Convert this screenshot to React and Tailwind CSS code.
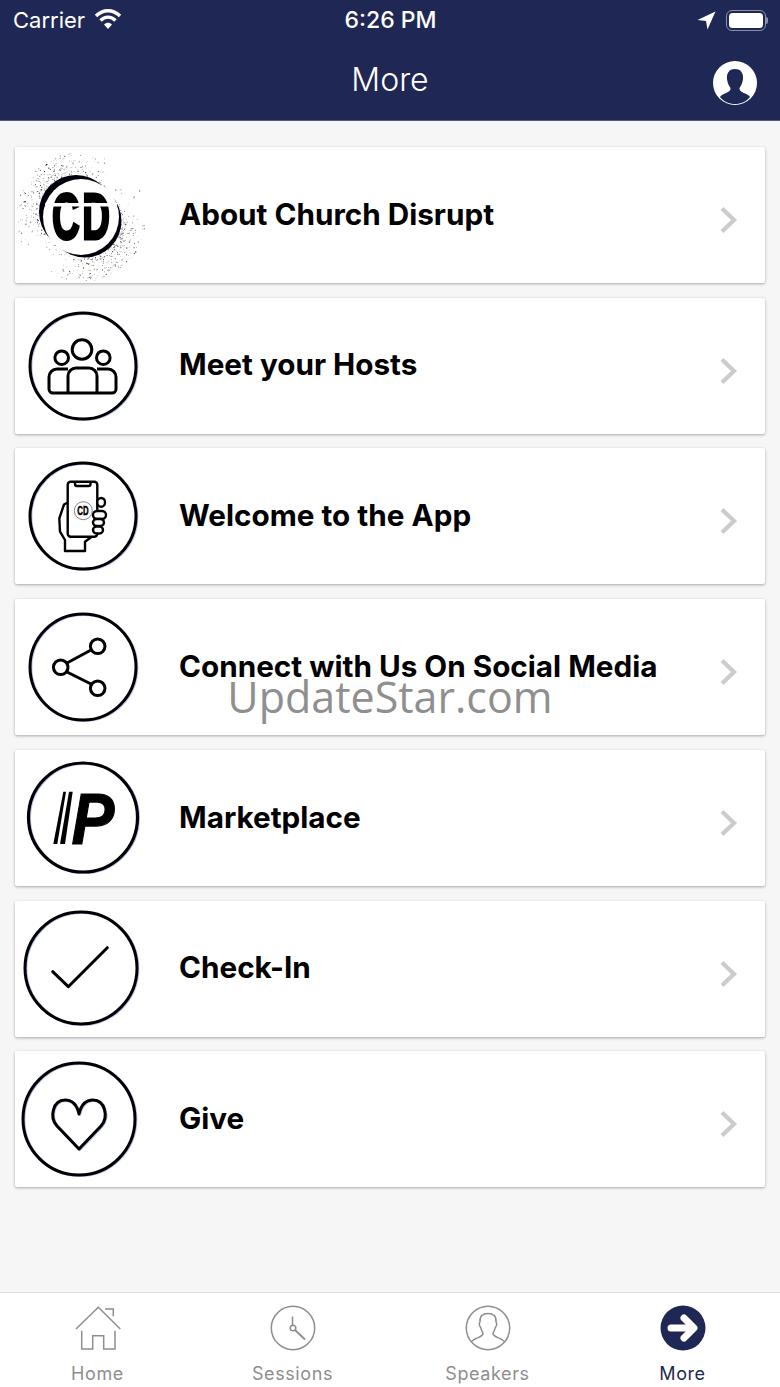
const FONT = { fontFamily: "Inter, 'Noto Sans', sans-serif" };

// seeded dots for the spray paint logo
function makeSpray() {
    let seed = 7;
    const rnd = () => {
        seed = (seed * 16807) % 2147483647;
        return seed / 2147483647;
    };
    const dots = [];
    for (let i = 0; i < 1100; i++) {
        const side = rnd() < 0.55 ? 3.9 : 0.85;
        const spread = (rnd() + rnd() + rnd() - 1.5) * 1.15;
        const angle = side + spread;
        const out = Math.pow(rnd(), 2.3) * 27;
        const r = 38 + out;
        dots.push({
            x: 66 + Math.cos(angle) * r,
            y: 70 + Math.sin(angle) * r,
            s: 0.22 + rnd() * 0.42,
            o: 0.35 + rnd() * 0.6,
        });
    }
    return dots;
}
const sprayDots = makeSpray();

function Ring({ cx, cy, r, sw = 3 }) {
    return (
        <>
            <circle cx={cx + 0.9} cy={cy + 0.5} r={r} fill="none" stroke="#b9c2ee" strokeWidth={sw} />
            <circle cx={cx} cy={cy} r={r} fill="none" stroke="#000" strokeWidth={sw} />
        </>
    );
}

function IconBox({ children }) {
    return (
        <svg width="165" height="136" viewBox="0 0 165 136" className="shrink-0">
            {children}
        </svg>
    );
}

function LogoIcon() {
    return (
        <IconBox>
            <defs>
                <filter id="soft" x="-20%" y="-20%" width="140%" height="140%">
                    <feGaussianBlur stdDeviation="0.6" />
                </filter>
            </defs>
            <g filter="url(#soft)">
                <circle cx="61" cy="65" r="37" fill="#05050f" />
                <circle cx="70" cy="74" r="36.5" fill="#05050f" />
            </g>
            {sprayDots.map((d, i) => (
                <circle key={i} cx={d.x} cy={d.y} r={d.s} fill="#0a0a14" opacity={d.o} />
            ))}
            <circle cx="66" cy="70" r="38" fill="#fff" />
            <text
                x="0"
                y="0"
                transform="translate(37 91.5) scale(0.6 1)"
                fontFamily="'Liberation Sans', sans-serif"
                fontWeight="700"
                fontSize="64"
                letterSpacing="4"
                stroke="#000"
                strokeWidth="3"
                fill="#000"
            >
                CD
            </text>
            <rect x="30" y="56" width="72" height="3.5" fill="#fff" />
        </IconBox>
    );
}

function HostsIcon() {
    return (
        <IconBox>
            <Ring cx={68} cy={68} r={53} />
            <g fill="none" stroke="#000" strokeWidth="3" strokeLinejoin="round">
                <circle cx="67" cy="51.5" r="9.8" />
                <circle cx="46.7" cy="59.7" r="6.8" />
                <circle cx="88.3" cy="59.7" r="6.8" />
                <path d="M53 95 V78 a8 8 0 0 1 8-8 h13 a8 8 0 0 1 8 8 V95" />
                <path d="M53 71 H42 a8 8 0 0 0 -8 8 v12 a4 4 0 0 0 4 4 H97 a4 4 0 0 0 4-4 v-12 a8 8 0 0 0-8-8 H82" />
            </g>
        </IconBox>
    );
}

function PhoneIcon() {
    return (
        <IconBox>
            <Ring cx={68} cy={68} r={53} />
            <g fill="none" stroke="#000" strokeWidth="2.4" strokeLinejoin="round">
                <path d="M53.3 54.3 L49 56.5 L44.3 70.3 L45 83.7 L50 92 V103 H70 V93.7 L76.7 88.7" />
                <rect x="52.7" y="33.7" width="29.6" height="55" rx="3" fill="#fff" />
                <path d="M60 34 v2 a2 2 0 0 0 2 2 h11.5 a2 2 0 0 0 2-2 v-2" />
                <rect x="82.3" y="50" width="7.7" height="8.7" rx="4" fill="#fff" />
                <rect x="78" y="63" width="13" height="8" rx="4" fill="#fff" />
                <rect x="78" y="71" width="11" height="7" rx="3.5" fill="#fff" />
                <rect x="78" y="78.5" width="10" height="7" rx="3.5" fill="#fff" />
            </g>
            <circle cx="68.3" cy="62.7" r="9" fill="#fff" stroke="#666" strokeWidth="0.8" />
            <text
                transform="translate(62.3 67) scale(0.65 1)"
                fontFamily="'Liberation Sans', sans-serif"
                fontWeight="700"
                fontSize="12"
                stroke="#000"
                strokeWidth="0.5"
                fill="#000"
            >
                CD
            </text>
        </IconBox>
    );
}

function ShareIcon() {
    return (
        <IconBox>
            <Ring cx={68} cy={68} r={53} />
            <g fill="none" stroke="#000" strokeWidth="3">
                <line x1="52" y1="64" x2="76" y2="51" />
                <line x1="52" y1="73" x2="76" y2="85" />
                <circle cx="82.7" cy="47.3" r="7.3" />
                <circle cx="45.7" cy="68.3" r="7.3" />
                <circle cx="82.7" cy="89.3" r="7.3" />
            </g>
        </IconBox>
    );
}

function MarketIcon() {
    return (
        <IconBox>
            <Ring cx={68} cy={67.5} r={54.5} sw={3.2} />
            <polygon points="48.3,41.7 51,41.7 42.3,94 38.3,94" fill="#000" />
            <polygon points="54,41.7 57.7,41.7 50,94 45,94" fill="#000" />
            <text
                transform="translate(56.5 93.5) scale(0.88 1)"
                fontFamily="'Liberation Sans', sans-serif"
                fontWeight="700"
                fontStyle="italic"
                fontSize="73"
                stroke="#000"
                strokeWidth="1.2"
                fill="#000"
            >
                P
            </text>
        </IconBox>
    );
}

function CheckIcon() {
    return (
        <IconBox>
            <Ring cx={66} cy={67} r={56} />
            <path d="M37.7 70.7 L53.3 85.7 L92.3 46.7" fill="none" stroke="#000" strokeWidth="3" strokeLinecap="round" strokeLinejoin="round" />
        </IconBox>
    );
}

function GiveIcon() {
    const heart = "M64 98 L42 75 C34 66 38 49 50 49 C57 49 62 54 64 63 C66 54 71 49 78 49 C90 49 94 66 86 75 Z";
    return (
        <IconBox>
            <Ring cx={64} cy={68} r={56} />
            <path d={heart} transform="translate(0.8 0.6)" fill="none" stroke="#b9c2ee" strokeWidth="3" strokeLinejoin="round" />
            <path d={heart} fill="none" stroke="#000" strokeWidth="3" strokeLinejoin="round" />
        </IconBox>
    );
}

const items = [
    { title: "About Church Disrupt", Icon: LogoIcon },
    { title: "Meet your Hosts", Icon: HostsIcon },
    { title: "Welcome to the App", Icon: PhoneIcon },
    { title: "Connect with Us On Social Media", Icon: ShareIcon },
    { title: "Marketplace", Icon: MarketIcon },
    { title: "Check-In", Icon: CheckIcon },
    { title: "Give", Icon: GiveIcon },
];

function Row({ title, Icon }) {
    return (
        <div className="flex items-center h-[136px] bg-white rounded-[2px] shadow-[0_1px_3px_rgba(0,0,0,0.32)]">
            <Icon />
            <div className="flex-1 -ml-[1px] mb-[2px] text-[29.7px] font-bold text-black">{title}</div>
            <svg width="20" height="28" viewBox="0 0 20 28" className="mr-[26px] mt-[10px]">
                <path d="M3 2.5 L15 14 L3 25.5" fill="none" stroke="#cccccc" strokeWidth="4.2" />
            </svg>
        </div>
    );
}

function StatusBar() {
    return (
        <div className="grid grid-cols-[1fr_auto_1fr] items-center h-[40px] pl-[13px] pr-[12px] text-white">
            <div className="flex items-center gap-[9px] text-[22px]">
                <span>Carrier</span>
                <svg width="28" height="22" viewBox="0 0 28 22" className="mb-[3px]">
                    <g fill="none" stroke="#fff" strokeWidth="3.4">
                        <path d="M2 8 C9 1 19 1 26 8" />
                        <path d="M6.5 12.5 C11 8 17 8 21.5 12.5" />
                    </g>
                    <path d="M10 16.5 C12.5 14 15.5 14 18 16.5 L14 21 Z" fill="#fff" />
                </svg>
            </div>
            <div className="text-[23px] font-medium">6:26 PM</div>
            <div className="flex items-center justify-end gap-[10px]">
                <svg width="19" height="19" viewBox="0 0 19 19">
                    <path d="M18.5 0.5 L10.5 18.5 L9 10 L0.5 9 Z" fill="#fff" />
                </svg>
                <div className="flex items-center">
                    <div className="w-[40px] h-[21px] rounded-[6px] border border-[#8a8fa8] p-[2px]">
                        <div className="w-full h-full rounded-[3.5px] bg-white" />
                    </div>
                    <div className="w-[2px] h-[7px] rounded-r-[2px] bg-[#8a8fa8]" />
                </div>
            </div>
        </div>
    );
}

function Profile() {
    return (
        <svg width="44" height="44" viewBox="0 0 44 44">
            <circle cx="22" cy="22" r="22" fill="#fff" />
            <path
                d="M22 8 C15.5 8 13.5 13 14 18 C14.4 22 16 25 17.5 27 C17.8 30 15 31 11 33 C8.5 34.2 7.5 35 7 36 C10.5 40.5 16 43 22 43 C28 43 33.5 40.5 37 36 C36.5 35 35.5 34.2 33 33 C29 31 26.2 30 26.5 27 C28 25 29.6 22 30 18 C30.5 13 28.5 8 22 8 Z"
                fill="#1f2855"
            />
        </svg>
    );
}

function Header() {
    return (
        <div className="bg-[#1f2855] border-b border-[#575c7e]">
            <StatusBar />
            <div className="grid grid-cols-[1fr_auto_1fr] items-center h-[80px] px-[23px] text-white">
                <div />
                <div className="text-[32px] font-light">More</div>
                <div className="justify-self-end mt-[6px]">
                    <Profile />
                </div>
            </div>
        </div>
    );
}

const GRAY = "#8e8e8e";

function HomeTab() {
    return (
        <svg width="46" height="46" viewBox="0 0 46 46">
            <g fill="none" stroke={GRAY} strokeWidth="1.5">
                <path d="M1 24 L23.3 2.3 L45.3 24" />
                <path d="M30 4 H38.3 V11.3" />
                <path d="M6.7 25.7 V44 H17.7 V30.7 H28.7 V44 H40 V25.7" />
            </g>
        </svg>
    );
}

function SessionsTab() {
    return (
        <svg width="46" height="46" viewBox="0 0 46 46">
            <g fill="none" stroke={GRAY} strokeWidth="1.5">
                <circle cx="23" cy="23" r="21.7" />
                <circle cx="23" cy="23" r="2.8" />
                <path d="M22.5 20 V11.5" />
                <path d="M25 25 L35 34.5" strokeWidth="1.8" />
            </g>
        </svg>
    );
}

function SpeakersTab() {
    return (
        <svg width="46" height="46" viewBox="0 0 46 46">
            <g fill="none" stroke={GRAY} strokeWidth="1.5">
                <circle cx="23" cy="23" r="21.7" />
                <path d="M6 37 C9 33 17 32.5 18 29 C18.2 27.5 16 25 15.5 22 C14 21 14 18 15 17 C14.5 11 17.5 8.5 23 8.5 C28.5 8.5 31.5 11 31 17 C32 18 32 21 30.5 22 C30 25 27.8 27.5 28 29 C29 32.5 37 33 40 37" />
            </g>
        </svg>
    );
}

function MoreTab() {
    return (
        <svg width="46" height="46" viewBox="0 0 46 46">
            <circle cx="23" cy="23" r="22.5" fill="#1f2855" />
            <g fill="none" stroke="#fff" strokeWidth="7" strokeLinecap="round" strokeLinejoin="round">
                <path d="M11 23 H31" />
                <path d="M24 13 L34 23 L24 33" />
            </g>
        </svg>
    );
}

const tabs = [
    { label: "Home", Icon: HomeTab },
    { label: "Sessions", Icon: SessionsTab },
    { label: "Speakers", Icon: SpeakersTab },
    { label: "More", Icon: MoreTab, active: true },
];

function TabBar() {
    return (
        <div className="grid grid-cols-4 h-[95px] mt-auto bg-white border-t border-[#dfdfdf]">
            {tabs.map(({ label, Icon, active }) => (
                <div key={label} className="flex flex-col items-center pt-[12px]">
                    <Icon />
                    <span className={`mt-[9px] text-[18px] tracking-[0.6px] ${active ? "text-[#1f2855]" : "text-[#8e8e8e]"}`}>
                        {label}
                    </span>
                </div>
            ))}
        </div>
    );
}

export default function App() {
    return (
        <div className="relative flex flex-col w-[780px] h-[1387px] overflow-hidden bg-[#f6f6f6]" style={FONT}>
            <Header />
            <div className="flex flex-col gap-[14.72px] pt-[26px] px-[15px]">
                {items.map((item) => (
                    <Row key={item.title} {...item} />
                ))}
            </div>
            <TabBar />
            {/* watermark over the screenshot */}
            <div className="absolute left-0 right-0 top-[668px] text-center text-[43px] leading-[58px] text-[#8f8f8f] font-['Open_Sans',sans-serif]">
                UpdateStar.com
            </div>
        </div>
    );
}
